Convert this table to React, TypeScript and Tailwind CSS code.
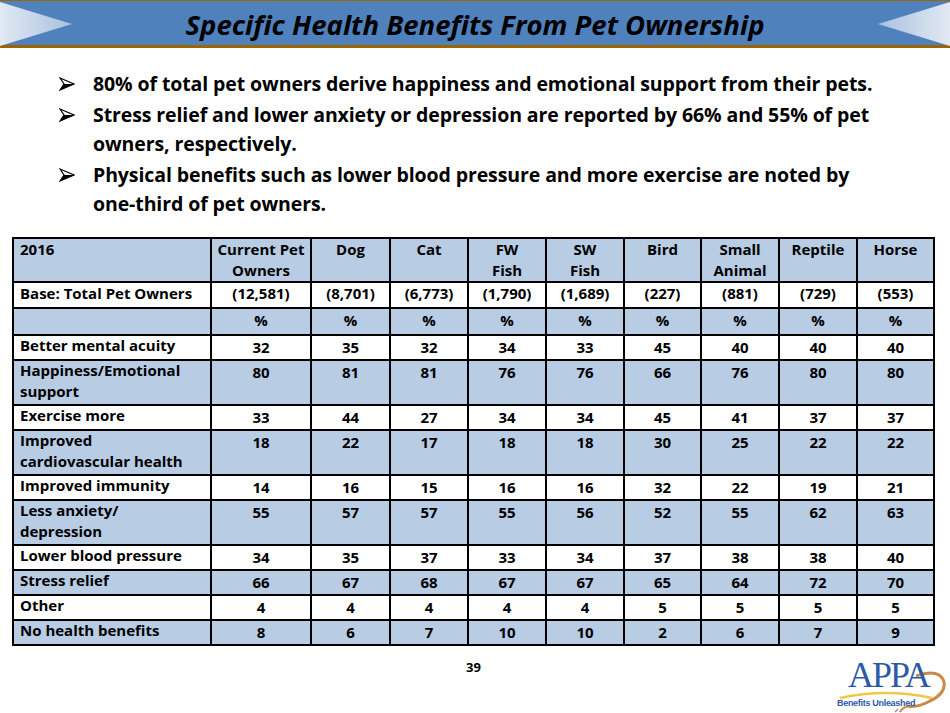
import React from "react";

const cols: React.ReactNode[] = [
  <>Current Pet<br />Owners</>,
  "Dog",
  "Cat",
  <>FW<br />Fish</>,
  <>SW<br />Fish</>,
  "Bird",
  <>Small<br />Animal</>,
  "Reptile",
  "Horse",
];
const colWidths = [198, 100, 79, 78, 78, 78, 77, 78, 78, 77];
const bases = ["(12,581)", "(8,701)", "(6,773)", "(1,790)", "(1,689)", "(227)", "(881)", "(729)", "(553)"];

const rows: { label: React.ReactNode; values: number[]; tall?: boolean }[] = [
  { label: "Better mental acuity", values: [32, 35, 32, 34, 33, 45, 40, 40, 40] },
  { label: <>Happiness/Emotional<br />support</>, values: [80, 81, 81, 76, 76, 66, 76, 80, 80], tall: true },
  { label: "Exercise more", values: [33, 44, 27, 34, 34, 45, 41, 37, 37] },
  { label: <>Improved<br />cardiovascular health</>, values: [18, 22, 17, 18, 18, 30, 25, 22, 22], tall: true },
  { label: "Improved immunity", values: [14, 16, 15, 16, 16, 32, 22, 19, 21] },
  { label: <>Less anxiety/<br />depression</>, values: [55, 57, 57, 55, 56, 52, 55, 62, 63], tall: true },
  { label: "Lower blood pressure", values: [34, 35, 37, 33, 34, 37, 38, 38, 40] },
  { label: "Stress relief", values: [66, 67, 68, 67, 67, 65, 64, 72, 70] },
  { label: "Other", values: [4, 4, 4, 4, 4, 5, 5, 5, 5] },
  { label: "No health benefits", values: [8, 6, 7, 10, 10, 2, 6, 7, 9] },
];

const bullets: string[][] = [
  ["80% of total pet owners derive happiness and emotional support from their pets."],
  ["Stress relief and lower anxiety or depression are reported by 66% and 55% of pet", "owners, respectively."],
  ["Physical benefits such as lower blood pressure and more exercise are noted by", "one-third of pet owners."],
];

function Arrow() {
  return (
    <svg width="16" height="14" viewBox="0 0 16 14" className="mt-[8px]">
      <polygon points="1,1 15,7 1,13 5,7" fill="white" stroke="black" strokeWidth="1.2" strokeLinejoin="miter" />
      <polygon points="5,7 15,7 1,13" fill="black" />
    </svg>
  );
}

function Header() {
  return (
    <div className="relative h-[48px] bg-[#4f81bd] border-t border-b-[3px] border-[#9c6500] flex items-center justify-center">
      <svg className="absolute left-0 top-[1px]" width="74" height="44" viewBox="0 0 74 44">
        <defs>
          <linearGradient id="gl" x1="0" x2="1" y1="0" y2="0">
            <stop offset="0" stopColor="#e2eaf4" />
            <stop offset="1" stopColor="#a9c0dd" />
          </linearGradient>
        </defs>
        <polygon points="0,0 72,22 0,44" fill="url(#gl)" />
      </svg>
      <svg className="absolute right-0 top-[1px]" width="74" height="44" viewBox="0 0 74 44">
        <defs>
          <linearGradient id="gr" x1="0" x2="1" y1="0" y2="0">
            <stop offset="0" stopColor="#a9c0dd" />
            <stop offset="1" stopColor="#e2eaf4" />
          </linearGradient>
        </defs>
        <polygon points="74,0 2,22 74,44" fill="url(#gr)" />
      </svg>
      <h1 className="text-[27.5px] font-bold italic text-black leading-none pt-[3px]">
        Specific Health Benefits From Pet Ownership
      </h1>
    </div>
  );
}

function Logo() {
  return (
    <div className="absolute left-[836px] top-[656px] w-[110px] h-[57px]">
      <svg className="absolute left-0 top-0" width="110" height="57" viewBox="0 0 110 57">
        <path d="M4 42 Q50 32 96 42" stroke="#edc94a" strokeWidth="2.5" fill="none" />
        <path d="M80 20 Q104 12 108 26 Q110 38 92 46 Q80 52 72 50" stroke="#c88a45" strokeWidth="3" fill="none" />
        <path d="M72 50 Q66 52 64 56" stroke="#c88a45" strokeWidth="2" fill="none" />
        <path d="M62 53 l-3 3" stroke="#999" strokeWidth="1.5" />
      </svg>
      <div className="absolute left-[12px] top-[1px] text-[36px] leading-none text-[#2c5aa8] tracking-[-2px]" style={{ fontFamily: '"Liberation Serif", serif' }}>
        APPA
      </div>
      <div className="absolute left-[1px] top-[43px] text-[9px] font-bold text-[#2c5aa8] leading-none tracking-[-0.3px]" style={{ fontFamily: '"Liberation Sans", sans-serif' }}>
        Benefits Unleashed
      </div>
    </div>
  );
}

export default function App() {
  return (
    <div className="relative w-[950px] h-[713px] bg-white overflow-hidden" style={{ fontFamily: "'Open Sans', sans-serif" }}>
      <Header />
      <ul className="mt-[21px] ml-[59px] flex flex-col gap-[2px]">
        {bullets.map((b, i) => (
          <li key={i} className="flex text-[19.5px] font-bold leading-[29px] text-black tracking-[-0.1px]">
            <span className="w-[34px] shrink-0">
              <Arrow />
            </span>
            <span className="flex flex-col">
              {b.map((l) => (
                <span key={l} className="whitespace-nowrap">{l}</span>
              ))}
            </span>
          </li>
        ))}
      </ul>
      <table className="absolute left-[12px] top-[237px] border-collapse text-[15px] font-bold text-black leading-[21px]">
        <colgroup>
          {colWidths.map((w, i) => (
            <col key={i} style={{ width: w }} />
          ))}
        </colgroup>
        <tbody>
          <tr className="bg-[#b8cce4] h-[44px] align-top">
            <td className="border-2 border-black px-[6px] pb-[2px]">2016</td>
            {cols.map((c, i) => (
              <td key={i} className="border-2 border-black px-[2px] text-center">{c}</td>
            ))}
          </tr>
          <tr className="bg-white h-[26px] align-top">
            <td className="border-2 border-black px-[6px] whitespace-nowrap">Base: Total Pet Owners</td>
            {bases.map((b, i) => (
              <td key={i} className="border-2 border-black text-center">{b}</td>
            ))}
          </tr>
          <tr className="bg-[#b8cce4] h-[27px] align-top">
            <td className="border-2 border-black px-[6px]"></td>
            {bases.map((_, i) => (
              <td key={i} className="border-2 border-black pt-[1px] text-center">%</td>
            ))}
          </tr>
          {rows.map((r, ri) => (
            <tr key={ri} className={`${ri % 2 === 1 ? "bg-[#b8cce4]" : "bg-white"} ${r.tall ? "h-[45px]" : "h-[25px]"} align-top`}>
              <td className="border-2 border-black px-[6px] whitespace-nowrap leading-[21px] -translate-y-[1px]">{r.label}</td>
              {r.values.map((v, i) => (
                <td key={i} className="border-2 border-black pt-[1px] text-center">{v}</td>
              ))}
            </tr>
          ))}
        </tbody>
      </table>
      <div className="absolute left-[466px] top-[658px] text-[13px] font-bold text-black">39</div>
      <Logo />
    </div>
  );
}
